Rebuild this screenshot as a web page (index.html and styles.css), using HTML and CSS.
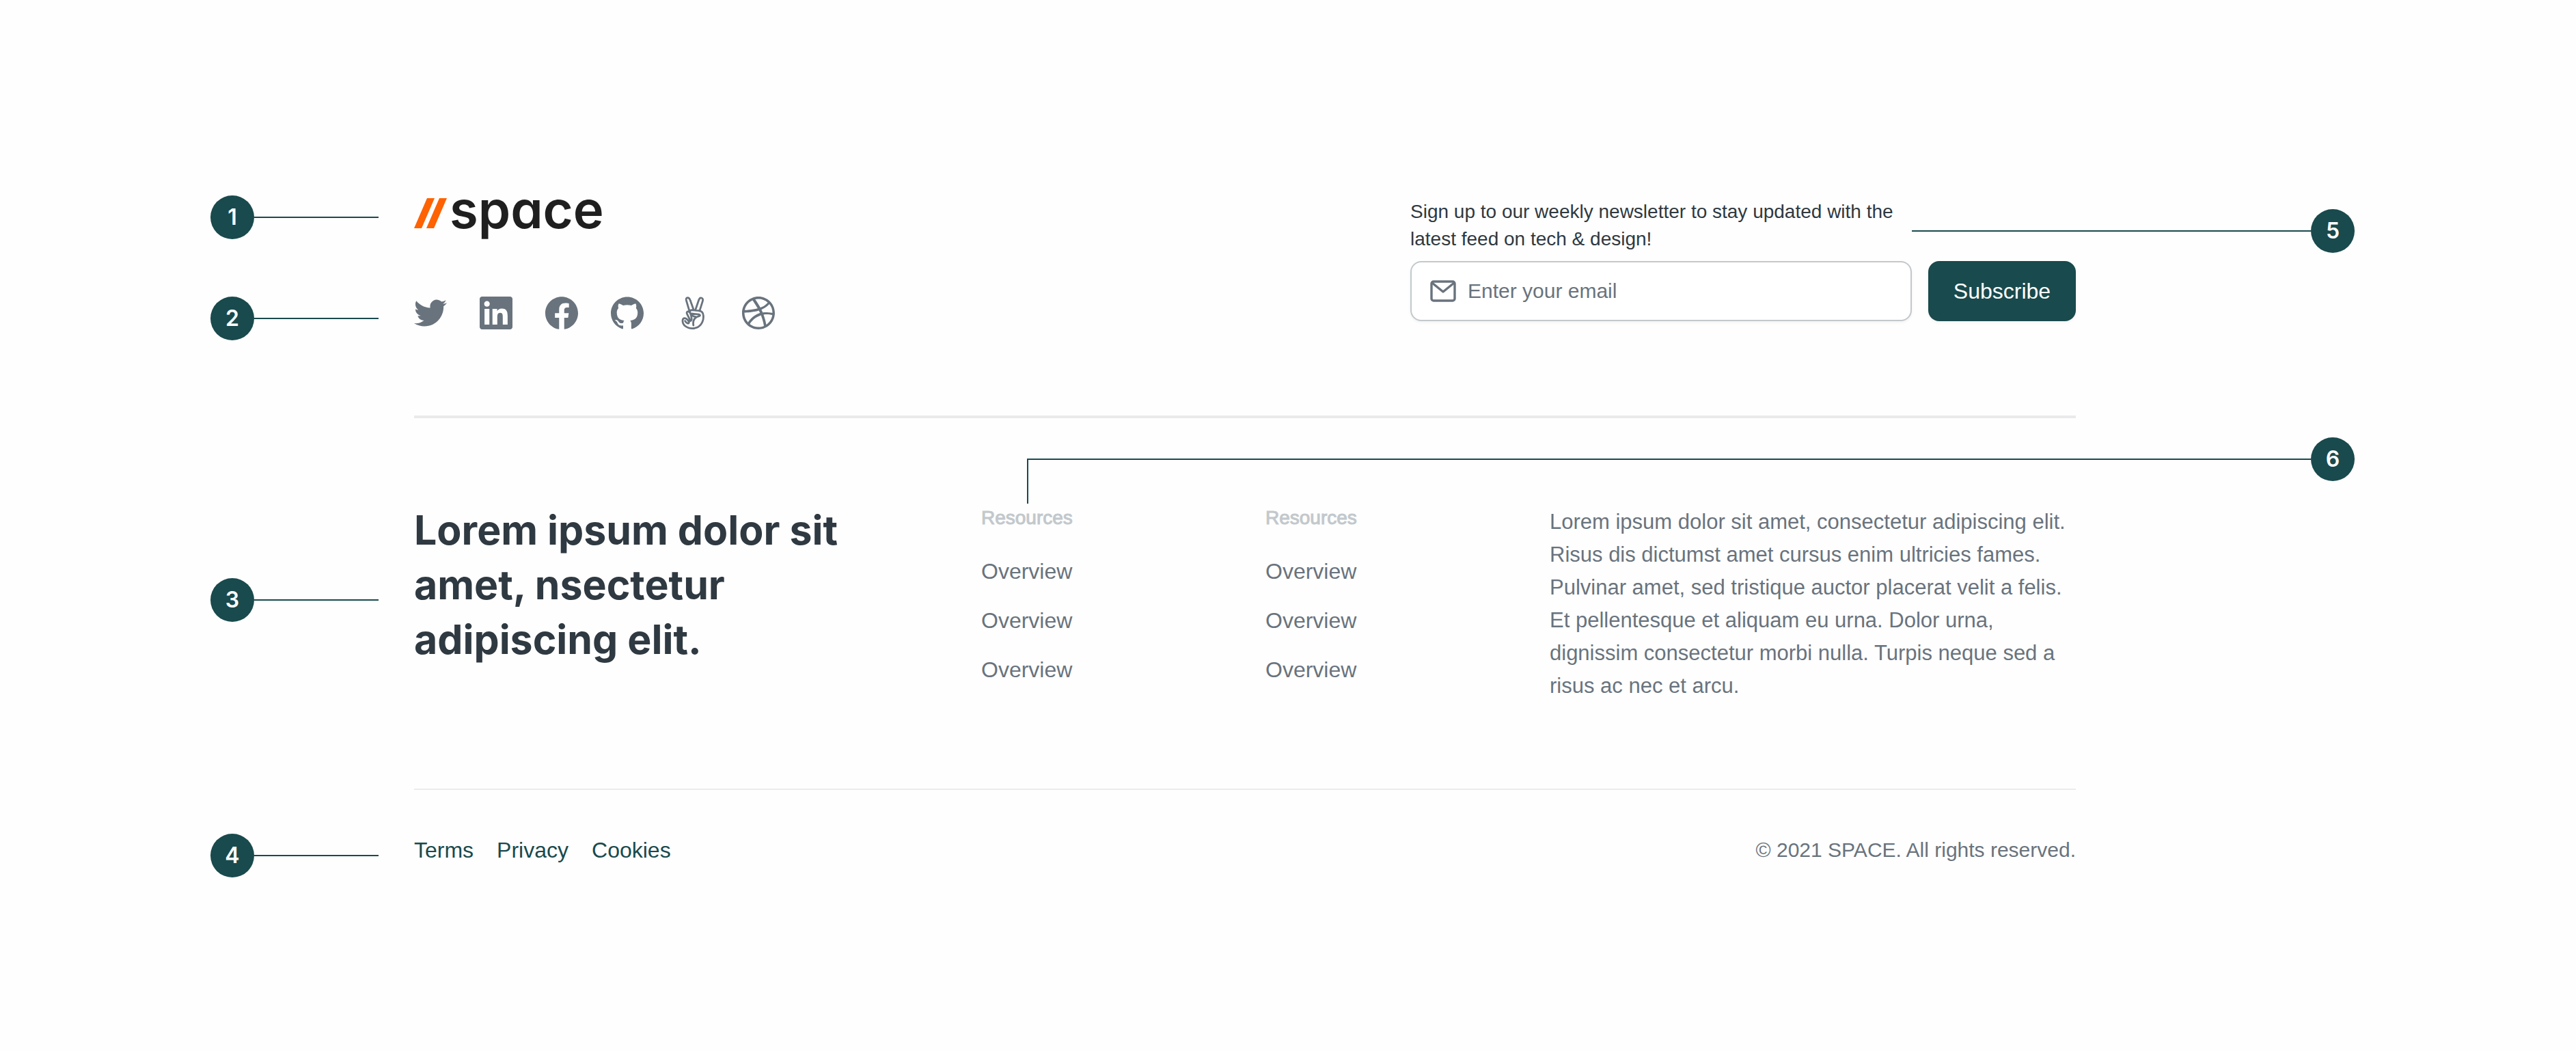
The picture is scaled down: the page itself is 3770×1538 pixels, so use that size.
FILE: index.html
```html
<!DOCTYPE html>
<html lang="en">
<head>
<meta charset="utf-8">
<meta name="viewport" content="width=device-width, initial-scale=1">
<title>Space – footer anatomy</title>
<link rel="stylesheet" href="styles.css">
</head>
<body>
<footer class="footer">
  <section class="footer-top">
    <div class="brand">
      <div class="anchor">
        <div class="callout callout-logo"><span class="badge">1</span><span class="lead"></span></div>
        <a class="logo" href="#" aria-label="Space home">
          <svg class="logo-mark" viewBox="0 0 48 44" aria-hidden="true"><path d="M19 0h11L11 44H0zM37 0h11L29 44H18z"/></svg>
          <span class="logo-word">space</span>
        </a>
      </div>
      <div class="anchor">
        <div class="callout callout-social"><span class="badge">2</span><span class="lead"></span></div>
        <nav class="social" aria-label="Social links">
          <a href="#" aria-label="Twitter"><svg viewBox="0 0 24 24"><path d="M23.953 4.57a10 10 0 01-2.825.775 4.958 4.958 0 002.163-2.723c-.951.555-2.005.959-3.127 1.184a4.92 4.92 0 00-8.384 4.482C7.69 8.095 4.067 6.13 1.64 3.162a4.822 4.822 0 00-.666 2.475c0 1.71.87 3.213 2.188 4.096a4.904 4.904 0 01-2.228-.616v.06a4.923 4.923 0 003.946 4.827 4.996 4.996 0 01-2.212.085 4.936 4.936 0 004.604 3.417 9.867 9.867 0 01-6.102 2.105c-.39 0-.779-.023-1.17-.067a13.995 13.995 0 007.557 2.209c9.053 0 13.998-7.496 13.998-13.985 0-.21 0-.42-.015-.63A9.935 9.935 0 0024 4.59z"/></svg></a>
          <a href="#" aria-label="LinkedIn"><svg viewBox="0 0 24 24"><path d="M20.447 20.452h-3.554v-5.569c0-1.328-.027-3.037-1.852-3.037-1.853 0-2.136 1.445-2.136 2.939v5.667H9.351V9h3.414v1.561h.046c.477-.9 1.637-1.85 3.37-1.85 3.601 0 4.267 2.37 4.267 5.455v6.286zM5.337 7.433c-1.144 0-2.063-.926-2.063-2.065 0-1.138.92-2.063 2.063-2.063 1.14 0 2.064.925 2.064 2.063 0 1.139-.925 2.065-2.064 2.065zm1.782 13.019H3.555V9h3.564v11.452zM22.225 0H1.771C.792 0 0 .774 0 1.729v20.542C0 23.227.792 24 1.771 24h20.451C23.2 24 24 23.227 24 22.271V1.729C24 .774 23.2 0 22.222 0h.003z"/></svg></a>
          <a href="#" aria-label="Facebook"><svg viewBox="0 0 24 24"><path d="M24 12.073c0-6.627-5.373-12-12-12s-12 5.373-12 12c0 5.99 4.388 10.954 10.125 11.854v-8.385H7.078v-3.47h3.047V9.43c0-3.007 1.792-4.669 4.533-4.669 1.312 0 2.686.235 2.686.235v2.953H15.83c-1.491 0-1.956.925-1.956 1.874v2.25h3.328l-.532 3.47h-2.796v8.385C19.612 23.027 24 18.062 24 12.073z"/></svg></a>
          <a href="#" aria-label="GitHub"><svg viewBox="0 0 24 24"><path d="M12 .297c-6.63 0-12 5.373-12 12 0 5.303 3.438 9.8 8.205 11.385.6.113.82-.258.82-.577 0-.285-.01-1.04-.015-2.04-3.338.724-4.042-1.61-4.042-1.61C4.422 18.07 3.633 17.7 3.633 17.7c-1.087-.744.084-.729.084-.729 1.205.084 1.838 1.236 1.838 1.236 1.07 1.835 2.809 1.305 3.495.998.108-.776.417-1.305.76-1.605-2.665-.3-5.466-1.332-5.466-5.93 0-1.31.465-2.38 1.235-3.22-.135-.303-.54-1.523.105-3.176 0 0 1.005-.322 3.3 1.23.96-.267 1.98-.399 3-.405 1.02.006 2.04.138 3 .405 2.28-1.552 3.285-1.23 3.285-1.23.645 1.653.24 2.873.12 3.176.765.84 1.23 1.91 1.23 3.22 0 4.61-2.805 5.625-5.475 5.92.42.36.81 1.096.81 2.22 0 1.606-.015 2.896-.015 3.286 0 .315.21.69.825.57C20.565 22.092 24 17.592 24 12.297c0-6.627-5.373-12-12-12"/></svg></a>
          <a href="#" aria-label="AngelList"><svg class="outline" viewBox="0 0 24 24"><path d="M9.4 10.3 7.3 3.2C6.8 1.5 7.2.8 8.2.8s1.4.5 1.9 2l2.5 6.9M13.9 9.7l2.4-7.1c.5-1.4 1.2-1.8 2-1.6 1.1.3 1.2 1.3.8 2.6l-2.2 7M9.9 11.5c-.4-1.2.6-1.7 1.8-1.6l4.5.4c2.6.2 3.4 1.6 3.5 3.7.3 5.2-2.9 9.3-8 9.3-4.3 0-7.2-2.6-7.2-5.6 0-1.3.6-2 1.7-1.9 1.5.2 3.2 2.4 2.9 3.4-.3 1-1.9.1-2.8-1.4M9 18.3c.9 0 1.1-.8.7-1.6l-1.9-3.9c-.6-1.3 0-2 1-1.8 1.4.4 2.1 3.6 2.3 5.3.1 1-.6 1.7-1.3 1.3M10.9 12.4l5.6.7c1 .2 1 1 .1 1.2-3 .7-4.8 2.9-4.2 6.7M10.900 12.400c.2 1.6 1.300 2.100 2.900 2.300"/></svg></a>
          <a href="#" aria-label="Dribbble"><svg viewBox="0 0 24 24"><path d="M12 24C5.385 24 0 18.615 0 12S5.385 0 12 0s12 5.385 12 12-5.385 12-12 12zm10.12-10.358c-.35-.11-3.17-.953-6.384-.438 1.34 3.684 1.887 6.684 1.992 7.308 2.3-1.555 3.936-4.02 4.395-6.87zm-6.115 7.808c-.153-.9-.75-4.032-2.19-7.77l-.066.02c-5.79 2.015-7.86 6.025-8.04 6.4 1.73 1.358 3.92 2.166 6.29 2.166 1.42 0 2.77-.29 4-.814zm-11.62-2.58c.232-.4 3.045-5.055 8.332-6.765.135-.045.27-.084.405-.12-.26-.585-.54-1.167-.832-1.74C7.17 11.775 2.206 11.71 1.756 11.7l-.004.312c0 2.633.998 5.037 2.634 6.855zm-2.42-8.955c.46.008 4.683.026 9.477-1.248-1.698-3.018-3.53-5.558-3.8-5.928-2.868 1.35-5.01 3.99-5.676 7.17zM9.6 2.052c.282.38 2.145 2.914 3.822 6 3.645-1.365 5.19-3.44 5.373-3.702-1.81-1.61-4.19-2.586-6.795-2.586-.825 0-1.63.1-2.4.285zm10.335 3.483c-.218.29-1.935 2.493-5.724 4.04.24.49.47.985.68 1.486.08.18.15.36.22.53 3.41-.43 6.8.26 7.14.33-.02-2.42-.88-4.64-2.31-6.38z"/></svg></a>
        </nav>
      </div>
    </div>
    <form class="newsletter">
      <div class="callout callout-newsletter"><span class="lead"></span><span class="badge">5</span></div>
      <label class="newsletter-text" for="email">Sign up to our weekly newsletter to stay updated with the<br>latest feed on tech &amp; design!</label>
      <div class="newsletter-row">
        <div class="field">
          <svg class="mail" viewBox="0 0 40 40" aria-hidden="true"><rect x="3" y="6" width="34" height="28" rx="3"/><path d="M4 8l16 13L36 8"/></svg>
          <input id="email" type="email" placeholder="Enter your email">
        </div>
        <button class="subscribe" type="submit">Subscribe</button>
      </div>
    </form>
  </section>

  <section class="footer-main">
    <div class="callout-elbow"><span class="badge">6</span></div>
    <div class="anchor">
      <div class="callout callout-heading"><span class="badge">3</span><span class="lead"></span></div>
      <h2 class="headline">Lorem ipsum dolor sit<br>amet, nsectetur<br>adipiscing elit.</h2>
    </div>
    <nav class="links">
      <h3>Resources</h3>
      <ul>
        <li><a href="#">Overview</a></li>
        <li><a href="#">Overview</a></li>
        <li><a href="#">Overview</a></li>
      </ul>
    </nav>
    <nav class="links">
      <h3>Resources</h3>
      <ul>
        <li><a href="#">Overview</a></li>
        <li><a href="#">Overview</a></li>
        <li><a href="#">Overview</a></li>
      </ul>
    </nav>
    <p class="about">Lorem ipsum dolor sit amet, consectetur adipiscing elit.<br>Risus dis dictumst amet cursus enim ultricies fames.<br>Pulvinar amet, sed tristique auctor placerat velit a felis.<br>Et pellentesque et aliquam eu urna. Dolor urna,<br>dignissim consectetur morbi nulla. Turpis neque sed a<br>risus ac nec et arcu.</p>
  </section>

  <section class="footer-bottom">
    <div class="callout callout-legal"><span class="badge">4</span><span class="lead"></span></div>
    <nav class="legal" aria-label="Legal">
      <a href="#">Terms</a>
      <a href="#">Privacy</a>
      <a href="#">Cookies</a>
    </nav>
    <p class="copyright">© 2021 SPACE. All rights reserved.</p>
  </section>
</footer>
</body>
</html>
```
FILE: styles.css
```css
:root {
  --teal: #194a4d;
  --slate: #69737d;
  --ink: #2f3941;
  --silver: #c2c8cc;
  --gutter-left: 298px;
  --gutter-right: 408px;
}

* { box-sizing: border-box; }

body {
  margin: 0;
  background: #fefefe;
  color: var(--slate);
  font: 400 32px/48px "Liberation Sans", Arial, sans-serif;
}

h2, h3, p, ul { margin: 0; padding: 0; }
ul { list-style: none; }
a { color: inherit; text-decoration: none; }
svg { display: block; }

.footer { padding: 290px 732px 250px 606px; }

.anchor { position: relative; }

/* Numbered callouts in the page gutters */
.callout {
  position: absolute;
  left: calc(-1 * var(--gutter-left));
  display: flex;
  align-items: center;
  width: 246px;
}
.lead { flex: 1; height: 2px; background: var(--teal); }
.badge {
  display: flex;
  align-items: center;
  justify-content: center;
  width: 64px;
  height: 64px;
  border-radius: 50%;
  background: var(--teal);
  color: #fff;
  font: 600 32px/40px Inter, sans-serif;
}
.callout-logo { top: -4px; }
.callout-social { top: 0; }
.callout-heading { top: 110px; }
.callout-legal { top: 64px; }
.callout-newsletter {
  top: 16px;
  left: auto;
  right: calc(-1 * var(--gutter-right));
  width: 648px;
}
.callout-elbow {
  position: absolute;
  grid-column: 2 / -1;
  top: 59px;
  left: 67px;
  right: calc(64px - var(--gutter-right));
  height: 66px;
  border: solid var(--teal);
  border-width: 2px 0 0 2px;
}
.callout-elbow .badge {
  position: absolute;
  top: -33px;
  left: 100%;
}

/* Brand and newsletter */
.footer-top {
  display: flex;
  justify-content: space-between;
  padding-bottom: 126px;
  border-bottom: 4px solid #e9eaec;
}
.brand { display: flex; flex-direction: column; gap: 80px; }
.logo { display: flex; gap: 4px; height: 64px; color: #1f1f1f; }
.logo-mark { width: 48px; height: 44px; fill: #ff6200; }
.logo-word {
  font: 600 76px/32px Inter, sans-serif;
  font-feature-settings: "cv11";
}
.social { display: flex; gap: 48px; fill: var(--slate); }
.social svg { width: 48px; height: 48px; }
.social .outline {
  fill: none;
  stroke: var(--slate);
  stroke-width: 1.4;
  stroke-linejoin: round;
  stroke-linecap: round;
}

.newsletter {
  position: relative;
  display: flex;
  flex-direction: column;
  gap: 12px;
  width: 974px;
}
.newsletter-text { color: var(--ink); font-size: 28px; line-height: 40px; }
.newsletter-row { display: flex; gap: 24px; }
.field {
  flex: 1;
  display: flex;
  align-items: center;
  gap: 16px;
  height: 88px;
  padding: 0 26px;
  border: 2px solid var(--silver);
  border-radius: 16px;
  background: #fff;
  box-shadow: 0 2px 4px rgba(0, 0, 0, .05);
}
.mail {
  width: 40px;
  height: 40px;
  fill: none;
  stroke: var(--slate);
  stroke-width: 3.4;
  stroke-linejoin: round;
}
.field input {
  flex: 1;
  min-width: 0;
  padding: 0;
  border: 0;
  outline: 0;
  background: none;
  color: var(--ink);
  font: inherit;
  font-size: 30px;
}
.field input::placeholder { color: var(--slate); opacity: 1; }
.subscribe {
  width: 216px;
  height: 88px;
  padding: 0;
  border: 0;
  border-radius: 16px;
  background: var(--teal);
  color: #fff;
  font: inherit;
  box-shadow: 0 2px 4px rgba(0, 0, 0, .05);
}

/* Headline, link lists, description */
.footer-main {
  position: relative;
  display: grid;
  grid-template-columns: 830fr 416fr 416fr 770fr;
  padding: 124px 0 126px;
  border-bottom: 2px solid #ececec;
}
.headline {
  color: var(--ink);
  font: 700 59px/80px Inter, sans-serif;
}
.links { display: flex; flex-direction: column; gap: 32px; }
.links h3 {
  color: var(--silver);
  font-size: 28px;
  font-weight: 400;
  line-height: 44px;
  -webkit-text-stroke: 1px var(--silver);
}
.links ul { display: flex; flex-direction: column; gap: 24px; }
.about { padding-top: 4px; font-size: 31px; white-space: nowrap; }

/* Legal row */
.footer-bottom {
  position: relative;
  display: flex;
  justify-content: space-between;
  padding-top: 64px;
}
.legal { display: flex; gap: 34px; color: var(--teal); }
.copyright { font-size: 30px; }
```
